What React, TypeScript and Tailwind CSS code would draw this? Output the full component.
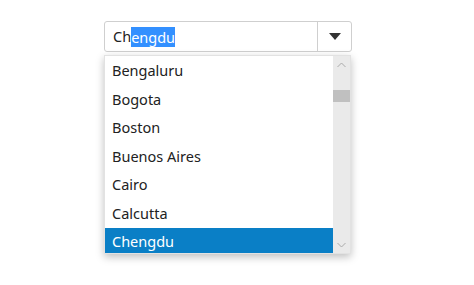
import React from "react";

const items = ["Bengaluru", "Bogota", "Boston", "Buenos Aires", "Cairo", "Calcutta", "Chengdu"];

export default function App() {
  return (
    <div className="w-[474px] h-[285px] bg-white relative" style={{ fontFamily: '"Noto Sans", "Open Sans", sans-serif' }}>
      <div className="pt-[21px] pl-[104px]">
        <div className="w-[248px] h-[31px] border border-[#cfcfcf] rounded-[3px] flex bg-white">
          <div className="flex-1 flex items-center pl-[8px] text-[14.5px] text-[#222]">
            <span>Ch</span>
            <span className="bg-[#3390ff] text-white leading-[20px]">engdu</span>
          </div>
          <div className="w-[34px] border-l border-[#cfcfcf] flex items-center justify-center">
            <svg width="12" height="8" viewBox="0 0 12 8"><path d="M0 0 L12 0 L6 7 Z" fill="#333" /></svg>
          </div>
        </div>
        <div className="mt-[3px] w-[247px] h-[199px] bg-white flex overflow-hidden shadow-[0_3px_8px_rgba(0,0,0,0.25)] border border-[#e2e2e2]">
          <div className="flex-1 pt-[1px] overflow-hidden">
            {items.map((it) => (
              <div
                key={it}
                className={`h-[28.5px] flex items-center pl-[7px] text-[14.5px] ${it === "Chengdu" ? "bg-[#0a7fc6] text-white" : "text-[#222]"}`}
              >
                {it}
              </div>
            ))}
          </div>
          <div className="w-[17px] bg-[#eaeaea] flex flex-col items-center">
            <div className="h-[17px] flex items-center justify-center">
              <svg width="9" height="6" viewBox="0 0 9 6"><path d="M0.5 5 L4.5 1 L8.5 5" fill="none" stroke="#aaa" strokeWidth="1" /></svg>
            </div>
            <div className="mt-[17px] w-[17px] h-[12px] bg-[#c0c0c0]" />
            <div className="flex-1" />
            <div className="h-[17px] flex items-center justify-center">
              <svg width="9" height="6" viewBox="0 0 9 6"><path d="M0.5 1 L4.5 5 L8.5 1" fill="none" stroke="#aaa" strokeWidth="1" /></svg>
            </div>
          </div>
        </div>
      </div>
    </div>
  );
}
